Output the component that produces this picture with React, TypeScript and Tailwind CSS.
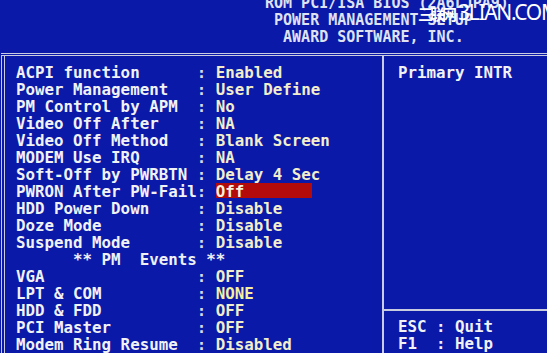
import type { ReactNode } from 'react';

type Row = {
  label?: string;
  value?: string;
  heading?: string;
  selected?: boolean;
  tone?: 'cream' | 'yellow';
};

const rows: Row[] = [
  { label: 'ACPI function', value: 'Enabled' },
  { label: 'Power Management', value: 'User Define' },
  { label: 'PM Control by APM', value: 'No' },
  { label: 'Video Off After', value: 'NA' },
  { label: 'Video Off Method', value: 'Blank Screen' },
  { label: 'MODEM Use IRQ', value: 'NA' },
  { label: 'Soft-Off by PWRBTN', value: 'Delay 4 Sec' },
  { label: 'PWRON After PW-Fail', value: 'Off', selected: true },
  { label: 'HDD Power Down', value: 'Disable' },
  { label: 'Doze Mode', value: 'Disable' },
  { label: 'Suspend Mode', value: 'Disable' },
  { heading: '      ** PM  Events **' },
  { label: 'VGA', value: 'OFF' },
  { label: 'LPT & COM', value: 'NONE', tone: 'yellow' },
  { label: 'HDD & FDD', value: 'OFF' },
  { label: 'PCI Master', value: 'OFF' },
  { label: 'Modem Ring Resume', value: 'Disabled' },
];

const mono = "font-['DejaVu_Sans_Mono','Liberation_Mono',monospace] font-bold";

function Line({ children }: { children: ReactNode }) {
  return <div className="flex h-[17px] whitespace-pre leading-[17px]">{children}</div>;
}

function SetupRow({ row }: { row: Row }) {
  if (row.heading) {
    return (
      <Line>
        <span className="text-[#eef0f6]">{row.heading}</span>
      </Line>
    );
  }
  const label = (row.label ?? '').padEnd(19, ' ');
  return (
    <Line>
      <span className="text-[#f1f2f6]">{label}</span>
      <span className="text-[#d6d9e6]">: </span>
      {row.selected ? (
        <span className="h-[15px] w-[96px] overflow-visible bg-[#b30b0b] text-[#f6f1dc]">
          {row.value}
        </span>
      ) : (
        <span className={row.tone === 'yellow' ? 'text-[#f3f0a0]' : 'text-[#f2eecb]'}>
          {row.value}
        </span>
      )}
    </Line>
  );
}

export default function App() {
  return (
    <div className={`relative h-[353px] w-[547px] overflow-hidden bg-[#0b19a9] ${mono}`}>
      {/* title block */}
      <div className="flex h-[53px] flex-col pl-[265px] text-[15px] leading-[17px] text-[#dfe2f2]">
        <div className="-mt-[5px] whitespace-pre">
          <div>ROM PCI/ISA BIOS (2A6LJPA9)</div>
          <div> POWER MANAGEMENT SETUP</div>
          <div>  AWARD SOFTWARE, INC.</div>
        </div>
      </div>

      {/* watermark */}
      <div className="absolute left-[418px] top-[-3px] flex items-baseline gap-[4px] whitespace-nowrap font-['Noto_Sans','Noto_Sans_CJK_SC',sans-serif] text-white">
        <span className="text-[15px] font-bold tracking-[-3px]">三联网</span>
        <span className="text-[21px] font-normal tracking-[-1.3px]">3LIAN.COM</span>
      </div>

      {/* main frame */}
      <div className="ml-[1px] flex h-[320px] border-t-[3px] border-double border-[#c9cce0]">
        <div className="w-[381px] border-l-[4px] border-double border-[#c9cce0] pl-[11px] pt-[8px] text-[15.8px]">
          {rows.map((r, i) => (
            <SetupRow key={i} row={r} />
          ))}
        </div>
        <div className="flex flex-1 flex-col border-l-2 border-[#c9cce0] text-[15.8px]">
          <div className="h-[253px] pl-[14px] pt-[8px] text-[#f1f2f6]">
            <Line>Primary INTR</Line>
          </div>
          <div className="border-t-2 border-[#c9cce0] pl-[14px] pt-[7px] text-[#f1f2f6]">
            <Line>ESC : Quit</Line>
            <Line>F1  : Help</Line>
          </div>
        </div>
      </div>
    </div>
  );
}
